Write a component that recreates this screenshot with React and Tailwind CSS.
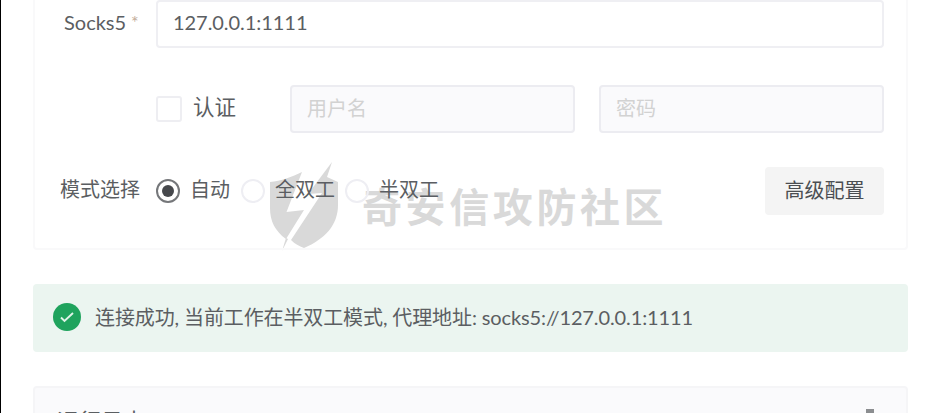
import React from "react";

function Radio({ checked = false }) {
  return (
    <span
      className={`flex size-6 shrink-0 items-center justify-center rounded-full border-2 ${
        checked ? "border-[#75777a]" : "border-[#eeeef3]"
      }`}
    >
      {checked && <span className="size-3 rounded-full bg-[#46484c]" />}
    </span>
  );
}

function Watermark() {
  return (
    <div className="pointer-events-none absolute left-[267px] top-[162px] flex h-[90px] items-center text-[#d9d9d9]">
      <svg width="72" height="90" viewBox="0 0 72 90" fill="currentColor">
        <path d="M2 20 C13 19 24 15 34 10 L18.5 50 L36 48 L18 77 C7 69 2 59 2 46 Z" />
        <path d="M64 0 L59 15 L70 20 V43 C70 63 57 77 36 86 C31 84 27 82 23 78 L54 31 L40 32 Z" />
        <path d="M18 76 L20 77 L14 89 Z" />
      </svg>
      <span className="ml-[22px] whitespace-nowrap text-[40px] leading-[48px] font-bold tracking-[3.6px]">
        奇安信攻防社区
      </span>
    </div>
  );
}

function Field({ placeholder }) {
  return (
    <div className="flex h-12 w-[285px] items-center rounded-[4px] border-2 border-[#ececf1] bg-[#fafafc] px-[15px] pb-[3px] text-[#d2d2d2]">
      {placeholder}
    </div>
  );
}

export default function App() {
  return (
    <div className="relative flex h-[413px] w-[938px] flex-col overflow-hidden border-l-[1.5px] border-black bg-white pl-8 pr-[30px] text-[20px] leading-7 text-[#5b5e62] [font-family:Lato,'Noto_Sans_CJK_SC',sans-serif]">
      <Watermark />
      <section className="relative flex h-[250px] shrink-0 flex-col rounded-b-[4px] border-x-2 border-b-2 border-[#f9f9fa] pr-[22px]">
        <div className="flex h-12 items-center">
          <div className="flex w-[121px] pb-1 pl-[29px]">
            <span>Socks5</span>
            <span className="ml-[5px] text-[18px] text-[#c3ad9b]">*</span>
          </div>
          <div className="flex h-12 flex-1 items-center rounded-[4px] border-2 border-[#efeff3] px-[15px] pb-1 tracking-[-0.05px]">
            127.0.0.1:1111
          </div>
        </div>
        <div className="mt-[37px] flex h-12 items-center">
          <span className="ml-[121px] size-[26px] rounded-[3px] border-2 border-[#eeeef2]" />
          <span className="ml-[11px] w-[97px] pb-1 text-[21.5px]">认证</span>
          <Field placeholder="用户名" />
          <div className="flex-1" />
          <Field placeholder="密码" />
        </div>
        <div className="mt-[34px] flex h-12 items-center">
          <span className="w-[121px] pb-1 pl-[25px]">模式选择</span>
          <Radio checked />
          <span className="ml-[10px] w-[51px] pb-1">自动</span>
          <Radio />
          <span className="ml-[10px] w-[70px] pb-1">全双工</span>
          <Radio />
          <span className="ml-[10px] pb-1">半双工</span>
          <button className="ml-auto h-12 w-[119px] rounded-[4px] bg-[#f4f4f4] pb-[3px] text-[#4b4e52]">
            高级配置
          </button>
        </div>
      </section>
      <section className="mt-[34px] flex h-[68px] shrink-0 items-center rounded-[4px] bg-[#ebf5f0] pl-5">
        <span className="mb-[3px] flex size-[28px] items-center justify-center rounded-full bg-[#1fa35d]">
          <svg width="16" height="12" viewBox="0 0 16 12" fill="none" stroke="#e0f3e8" strokeWidth="1.9">
            <path d="M2 6.5 L5.5 10 L14 2" />
          </svg>
        </span>
        <span className="ml-[14px] whitespace-nowrap pb-[3px] tracking-[-0.11px]">
          连接成功, 当前工作在半双工模式, 代理地址: socks5://127.0.0.1:1111
        </span>
      </section>
      <section className="mt-[34px] flex h-[68px] shrink-0 items-start justify-between rounded-t-[4px] border-2 border-[#f5f5f7] bg-[#fafafc] pl-[22px] pr-8 pt-[18px]">
        <span className="text-[22px] leading-[30px]">运行日志</span>
        <span className="mt-[3px] h-5 w-2 bg-[#8b8d90]" />
      </section>
    </div>
  );
}
